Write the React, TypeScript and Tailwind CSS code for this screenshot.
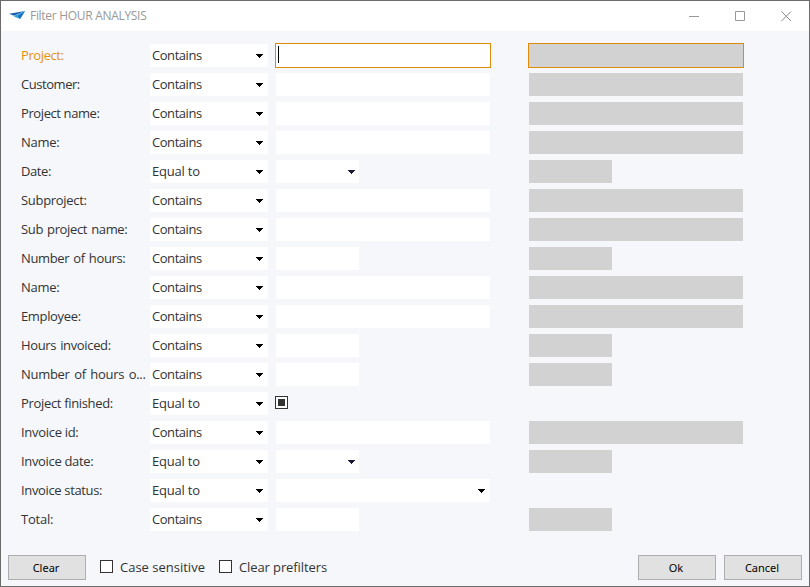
type FieldKind = 'text' | 'short' | 'date' | 'check' | 'select';

interface Row {
  label: string;
  op: string;
  kind: FieldKind;
  spacing: string;
  active?: boolean;
}

const rows: Row[] = [
  { label: 'Project:', op: 'Contains', kind: 'text', spacing: 'tracking-[-0.4px]', active: true },
  { label: 'Customer:', op: 'Contains', kind: 'text', spacing: 'tracking-[-0.45px]' },
  { label: 'Project name:', op: 'Contains', kind: 'text', spacing: 'tracking-[-0.4px]' },
  { label: 'Name:', op: 'Contains', kind: 'text', spacing: 'tracking-[-0.3px]' },
  { label: 'Date:', op: 'Equal to', kind: 'date', spacing: 'tracking-[-0.4px]' },
  { label: 'Subproject:', op: 'Contains', kind: 'text', spacing: 'tracking-[-0.3px]' },
  { label: 'Sub project name:', op: 'Contains', kind: 'text', spacing: 'tracking-[-0.35px] [word-spacing:1px]' },
  { label: 'Number of hours:', op: 'Contains', kind: 'short', spacing: 'tracking-[-0.35px] [word-spacing:1px]' },
  { label: 'Name:', op: 'Contains', kind: 'text', spacing: 'tracking-[-0.3px]' },
  { label: 'Employee:', op: 'Contains', kind: 'text', spacing: 'tracking-[-0.35px]' },
  { label: 'Hours invoiced:', op: 'Contains', kind: 'short', spacing: 'tracking-[-0.35px] [word-spacing:1px]' },
  { label: 'Number of hours o...', op: 'Contains', kind: 'short', spacing: 'tracking-[-0.3px] [word-spacing:1.5px]' },
  { label: 'Project finished:', op: 'Equal to', kind: 'check', spacing: 'tracking-[-0.33px]' },
  { label: 'Invoice id:', op: 'Contains', kind: 'text', spacing: 'tracking-[-0.3px]' },
  { label: 'Invoice date:', op: 'Equal to', kind: 'date', spacing: 'tracking-[-0.33px]' },
  { label: 'Invoice status:', op: 'Equal to', kind: 'select', spacing: 'tracking-[-0.35px]' },
  { label: 'Total:', op: 'Contains', kind: 'short', spacing: 'tracking-[-0.2px]' },
];

function Arrow({ color = '#000000' }: { color?: string }) {
  return (
    <svg className="block h-1 w-[7px] shrink-0" viewBox="0 0 7 4" fill={color} shapeRendering="crispEdges">
      <path d="M0 0h7v1H0zM1 1h5v1H1zM2 2h3v1H2zM3 3h1v1H3z" />
    </svg>
  );
}

function Field({ row }: { row: Row }) {
  if (row.kind === 'check') {
    return (
      <div className="-ml-px flex size-[13px] items-center justify-center self-start border border-[#333] bg-white mt-1">
        <div className="size-[7px] bg-[#333]" />
      </div>
    );
  }
  if (row.active) {
    return (
      <div className="-mx-px h-[25px] w-[216px] shrink-0 border border-[#dc8c0a] bg-white pl-[2px] pt-[2px]">
        <div className="h-[17px] w-px bg-black" />
      </div>
    );
  }
  if (row.kind === 'date') {
    return (
      <div className="flex h-[23px] w-[83px] items-center justify-end bg-white pr-1 pt-px">
        <Arrow color="#1b1b38" />
      </div>
    );
  }
  if (row.kind === 'short') return <div className="h-[23px] w-[83px] bg-white" />;
  return (
    <div className="flex h-[23px] w-[214px] items-center justify-end bg-white pr-[5px] pt-px">
      {row.kind === 'select' && <Arrow />}
    </div>
  );
}

function Secondary({ row }: { row: Row }) {
  if (row.kind === 'check' || row.kind === 'select') return null;
  if (row.active) {
    return <div className="-mx-px h-[25px] w-[216px] shrink-0 border border-[#dc8c0a] bg-[#d2d2d2]" />;
  }
  if (row.kind === 'text') return <div className="h-[23px] w-[214px] bg-[#d2d2d2]" />;
  return <div className="h-[23px] w-[83px] bg-[#d2d2d2]" />;
}

function FilterRow({ row }: { row: Row }) {
  return (
    <div className="flex h-[23px] items-center text-[13px] leading-[23px] text-[#333]">
      <div className={`w-[129px] shrink-0 whitespace-pre ${row.spacing} ${row.active ? 'text-[#e8920c]' : ''}`}>
        {row.label}
      </div>
      <div className="flex h-[23px] w-[118px] shrink-0 items-center justify-between bg-white pl-[2px] pr-[5px]">
        <span className={row.op === 'Contains' ? 'tracking-[-0.45px]' : 'tracking-[-0.2px]'}>{row.op}</span>
        <div className="pt-px">
          <Arrow />
        </div>
      </div>
      <div className="ml-2 flex h-[23px] w-[253px] shrink-0 items-center">
        <Field row={row} />
      </div>
      <Secondary row={row} />
    </div>
  );
}

function PushButton({ text }: { text: string }) {
  return (
    <button className="h-[25px] w-[78px] shrink-0 border border-[#adadad] bg-[#e1e1e1] pr-[2px] text-[11px] leading-[23px] text-black [font-family:'Noto_Sans',sans-serif]">
      {text}
    </button>
  );
}

function CheckOption({ text, spacing }: { text: string; spacing: string }) {
  return (
    <label className="flex items-center gap-[7px]">
      <span className="-mt-0.5 size-[13px] border border-[#333] bg-white" />
      <span className={spacing}>{text}</span>
    </label>
  );
}

export default function App() {
  return (
    <div className="flex h-[587px] w-[810px] flex-col overflow-hidden border border-[#6b6b6b] bg-[#f5f7fb] [font-family:'Open_Sans',sans-serif]">
      <header className="flex h-[30px] shrink-0 items-center bg-white pl-2 pr-[17px] text-[12px] text-[#999]">
        <svg className="mr-[5px] h-4 w-4" viewBox="0 0 16 16">
          <path d="M0 5.8 16 3 5 7.8Z" fill="#1b62ad" />
          <path d="M4.5 8.2 16 3 11 11Z" fill="#2fa0df" />
          <path d="M9 8 16 3 11 11Z" fill="#1d6dba" />
        </svg>
        <span className="whitespace-pre tracking-[-0.3px]">Filter HOUR ANALYSIS</span>
        <div className="ml-auto flex items-center gap-[35px]">
          <svg className="h-[11px] w-[11px]" viewBox="0 0 11 11"><path d="M0 5.5h10" stroke="#999" /></svg>
          <svg className="h-[11px] w-[11px]" viewBox="0 0 11 11"><path d="M.5.5h9v9h-9z" stroke="#999" fill="none" /></svg>
          <svg className="h-[11px] w-[11px]" viewBox="0 0 11 11"><path d="M.5.5l9.5 9.5M10 .5.5 10" stroke="#888" fill="none" /></svg>
        </div>
      </header>
      <main className="flex flex-col gap-1.5 pl-5 pt-[13px]">
        {rows.map((row, i) => (
          <FilterRow key={i} row={row} />
        ))}
      </main>
      <footer className="mt-6 flex items-center pl-[7px] pr-[7px] text-[13px] text-[#333]">
        <PushButton text="Clear" />
        <div className="ml-[14px] flex items-center gap-[14px]">
          <CheckOption text="Case sensitive" spacing="tracking-normal" />
          <CheckOption text="Clear prefilters" spacing="tracking-[-0.1px]" />
        </div>
        <div className="ml-auto flex gap-2">
          <PushButton text="Ok" />
          <PushButton text="Cancel" />
        </div>
      </footer>
    </div>
  );
}
